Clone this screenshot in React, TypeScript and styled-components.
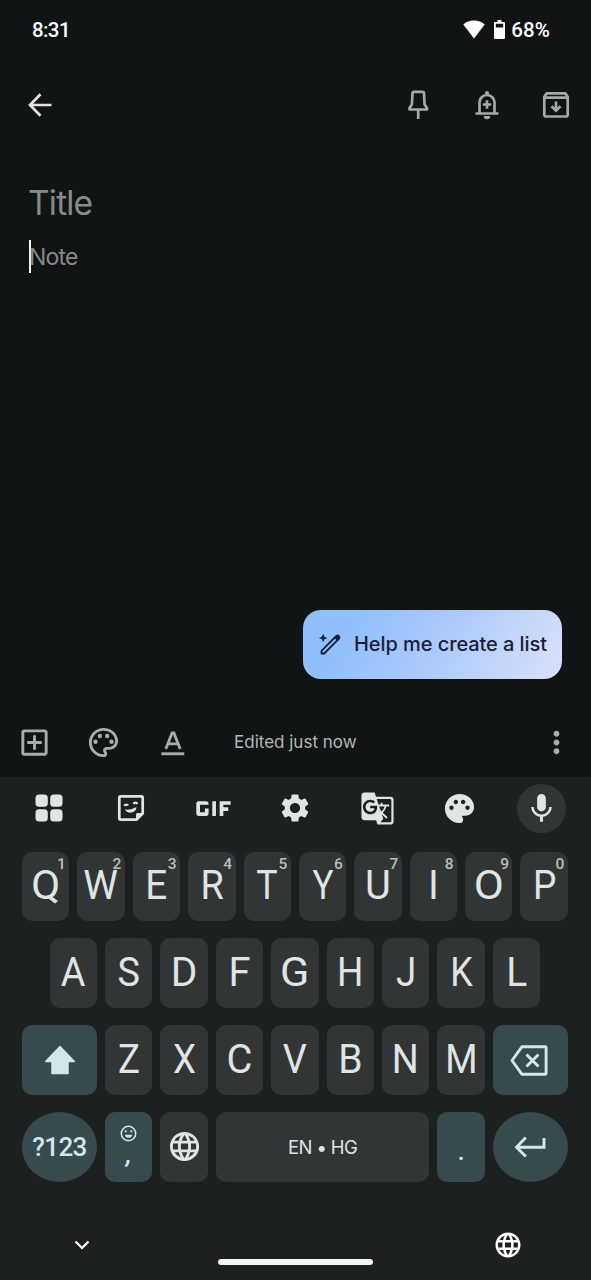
import React from "react";
import styled, { createGlobalStyle } from "styled-components";
import {
  MdOutlineAddBox,
  MdOutlinePalette,
  MdMoreVert,
  MdGif,
  MdSettings,
  MdGTranslate,
  MdPalette,
  MdMic,
  MdLanguage,
} from "react-icons/md";

const GlobalStyle = createGlobalStyle`
  * { box-sizing: border-box; }
  body { margin: 0; background: #101414; }
  svg { display: block; flex: none; }
`;

const Screen = styled.div`
  width: 591px;
  height: 1280px;
  display: flex;
  flex-direction: column;
  overflow: hidden;
  background: #101414;
  font-family: Inter, Roboto, "Liberation Sans", sans-serif;
`;

const StatusBar = styled.header`
  height: 59px;
  padding: 0 41px 0 32px;
  display: flex;
  align-items: center;
  justify-content: space-between;
  color: #fff;
`;

const StatusText = styled.span<{ $spacing: number }>`
  font: 500 20.5px/24px Roboto, sans-serif;
  letter-spacing: ${(p) => p.$spacing}px;
`;

const StatusIcons = styled.div`
  display: flex;
  align-items: center;
  gap: 6px;
  & > svg:first-child { margin-right: 3px; }
`;

const AppBar = styled.nav`
  height: 92px;
  padding: 0 18px 0 23px;
  display: flex;
  align-items: center;
  justify-content: space-between;
  color: #e1e3e3;
`;

const AppActions = styled.div`
  display: flex;
  gap: 35px;
  color: #a6a9a9;
`;

const Editor = styled.main`
  flex: 1;
  padding: 28px 29px 0 28px;
  display: flex;
  flex-direction: column;
  align-items: flex-start;
  color: #878a8a;
`;

const TitleField = styled.div`
  font-size: 33.5px;
  line-height: 48px;
  letter-spacing: -0.8px;
`;

const NoteField = styled.div`
  margin: 13px 0 0 1px;
  height: 33px;
  border-left: 2px solid #f4f5f5;
  font-size: 23px;
  line-height: 34px;
  letter-spacing: -0.8px;
`;

const NoteHint = styled.span`
  margin-left: -2px;
`;

const HelpButton = styled.button`
  align-self: flex-end;
  margin: auto 0 31px;
  width: 259px;
  height: 69px;
  padding: 0 0 1px 15px;
  border: 0;
  border-radius: 18px;
  display: flex;
  align-items: center;
  gap: 11px;
  color: #1b2138;
  background: linear-gradient(118deg, #91bffc 18%, #aecbfb 55%, #d6dffa 95%);
  font: 500 20px/24px Inter, Roboto, sans-serif;
  letter-spacing: -0.07px;
  white-space: nowrap;
`;

const NoteToolbar = styled.div`
  height: 67px;
  padding: 0 17px 3px 17px;
  display: flex;
  align-items: center;
  color: #a9acac;
`;

const ToolGroup = styled.div`
  display: flex;
  gap: 34px;
`;

const EditedLabel = styled.span`
  margin-left: 44px;
  flex: 1;
  font-size: 17px;
  color: #b4b7b7;
  white-space: nowrap;
`;

const Keyboard = styled.section`
  height: 503px;
  display: flex;
  flex-direction: column;
  background: #1c2020;
  color: #e0e4e4;
`;

const Suggestions = styled.div`
  height: 62px;
  margin-bottom: 12.7px;
  padding: 0 8px;
  display: grid;
  grid-template-columns: repeat(7, 1fr);
  place-items: center;
`;

const MicButton = styled.div`
  width: 49px;
  height: 49px;
  border-radius: 50%;
  display: grid;
  place-items: center;
  background: #313535;
`;

const KeyRows = styled.div`
  display: flex;
  flex-direction: column;
  gap: 17.3px;
  padding: 0 23.2px 0 22px;
`;

const KeyRow = styled.div`
  height: 69.5px;
  display: flex;
  justify-content: center;
  gap: 8px;
`;

const Key = styled.div<{ $w?: number; $accent?: boolean; $round?: boolean }>`
  position: relative;
  width: ${(p) => p.$w ?? 47.4}px;
  flex: none;
  display: flex;
  flex-direction: column;
  align-items: center;
  justify-content: center;
  border-radius: ${(p) => (p.$round ? "50%" : "10px")};
  background: ${(p) => (p.$accent ? "#374a4d" : "#313535")};
  color: ${(p) => (p.$accent ? "#d3e7ea" : "#e0e4e4")};
`;

const Letter = styled.span<{ $stretch: number }>`
  font: 400 39.8px/46px Roboto, sans-serif;
  transform: scaleX(${(p) => p.$stretch});
`;

const Hint = styled.span`
  position: absolute;
  top: 3px;
  right: 3.5px;
  font: 500 15.5px/18px Roboto, sans-serif;
  color: #b9bdbd;
`;

const SymbolLabel = styled.span`
  font: 500 26px/30px Roboto, sans-serif;
  letter-spacing: -0.6px;
`;

const SpaceLabel = styled.span`
  font-size: 18.5px;
  letter-spacing: -0.6px;
`;

const Punctuation = styled.span<{ $shift: number; $slant?: boolean }>`
  font: ${(p) => (p.$slant ? "italic" : "normal")} 500 26px/30px Roboto, sans-serif;
  margin-top: ${(p) => p.$shift}px;
`;

const NavBar = styled.footer`
  flex: 1;
  padding: 33px 68px 0 73px;
  display: flex;
  justify-content: space-between;
  align-items: flex-start;
  color: #fff;
`;

const HomeHandle = styled.div`
  width: 155px;
  height: 6px;
  margin: 44px 0 0 6px;
  border-radius: 3px;
  background: #f4f5f5;
`;

const ChevronBox = styled.div`
  margin-top: 24px;
`;

const GlobeBox = styled.div`
  margin-top: 15px;
`;

const stroke = { fill: "none", stroke: "currentColor" } as const;

const WifiIcon = () => (
  <svg width="22" height="19" viewBox="0 0 22 19" fill="currentColor">
    <path d="M11 .5C6.700.5 3 2 .3 4.400L11 18.500 21.700 4.400C19 2 15.300.5 11 .5Z" />
  </svg>
);

const BatteryIcon = () => (
  <svg width="11" height="19" viewBox="0 0 11 19" fill="currentColor" fillRule="evenodd">
    <path d="M3.500 0h4v2H10a1 1 0 0 1 1 1v15a1 1 0 0 1-1 1H1a1 1 0 0 1-1-1V3a1 1 0 0 1 1-1h2.500ZM1.800 3.800v3.700h7.400V3.800Z" />
  </svg>
);

const BackIcon = () => (
  <svg width="34" height="34" viewBox="0 0 34 34" {...stroke} strokeWidth="2.700">
    <path d="M28.500 17H7.500M17.500 6.300 7 17l10.500 10.700" />
  </svg>
);

const PinIcon = () => (
  <svg width="34" height="34" viewBox="0 0 34 34" {...stroke} strokeWidth="2.700" strokeLinejoin="round">
    <path d="M13 3.800h8.500a1.500 1.500 0 0 1 1.500 1.400l.6 11.300 2.400 3.500v1.500H8.500V20l2.400-3.500.6-11.300A1.500 1.500 0 0 1 13 3.800ZM17.200 21.500V31" />
  </svg>
);

const ReminderIcon = () => (
  <svg width="34" height="34" viewBox="0 0 34 34" {...stroke} strokeWidth="2.700">
    <path d="M5.500 25.500h23M9.500 25.500V14.500a7.500 7.500 0 0 1 15 0V25.500M17 4v3.500M17 12.300v8.400M12.800 16.500h8.400" />
    <circle cx="17" cy="5" r="2" fill="currentColor" stroke="none" />
    <path d="M13.800 28h6.400a3.200 3.200 0 0 1-6.400 0Z" fill="currentColor" stroke="none" />
  </svg>
);

const ArchiveIcon = () => (
  <svg width="34" height="34" viewBox="0 0 34 34" {...stroke} strokeWidth="2.700" strokeLinejoin="round">
    <path d="M5.300 8.700 7.700 5.400h18.600L28.700 8.700V26.500a2 2 0 0 1-2 2H7.300a2 2 0 0 1-2-2ZM5.300 9.700h23.400" />
    <path d="M17 13.500v9M12.500 18.200 17 22.700l4.500-4.500" strokeLinejoin="miter" />
  </svg>
);

const TextColorIcon = () => (
  <svg width="35" height="35" viewBox="0 0 35 35" {...stroke} strokeWidth="2.900">
    <path d="M6.300 28.800h23" />
    <path d="m10.800 24 6.300-16h1.800l6.300 16M13.200 18.800h9.600" strokeWidth="2.800" />
  </svg>
);

const MagicPenIcon = () => (
  <svg width="25" height="25" viewBox="0 0 25 25" {...stroke} strokeWidth="1.800" strokeLinejoin="round">
    <path d="M3.500 18.800 17.800 4.500a1.900 1.900 0 0 1 2.700 2.700L6.200 21.500H3.500Z" />
    <path d="m15.800 5.500 2-2a2.600 2.600 0 0 1 3.700 3.700l-2 2Z" fill="currentColor" stroke="none" />
    <path d="m5.200 1.700 1.300 3 3 1.300-3 1.300-1.300 3-1.300-3-3-1.300 3-1.300Z" fill="currentColor" stroke="none" />
  </svg>
);

const AppsIcon = () => (
  <svg width="28" height="28" viewBox="0 0 28 28" fill="currentColor">
    <rect x=".5" y=".5" width="12.300" height="12.300" rx="3.500" />
    <rect x="15.200" y=".5" width="12.300" height="12.300" rx="3.500" />
    <rect x=".5" y="15.200" width="12.300" height="12.300" rx="3.500" />
    <rect x="15.200" y="15.200" width="12.300" height="12.300" rx="3.500" />
  </svg>
);

const StickerIcon = () => (
  <svg width="28" height="28" viewBox="0 0 28 28" {...stroke} strokeWidth="2.700">
    <path d="M3.500 2.300h21a1.200 1.200 0 0 1 1.200 1.200v16l-6.200 6.200h-16a1.200 1.200 0 0 1-1.200-1.200v-21a1.200 1.200 0 0 1 1.200-1.200Z" />
    <path d="M19 26v-5.500a1.500 1.500 0 0 1 1.500-1.500H26Z" fill="currentColor" stroke="none" />
    <path d="M7.500 12c.5-1.800 2.800-1.800 3.500-.5M16.500 10c.7-1.800 3-1.800 3.700 0" strokeWidth="2.400" />
    <path d="M8 15.500c4 .5 8-.5 11.500-2.500-.3 6-8.500 8-11.500 2.500Z" fill="currentColor" stroke="none" />
  </svg>
);

const ShiftIcon = () => (
  <svg width="32" height="30" viewBox="0 0 32 30" fill="currentColor" stroke="currentColor" strokeWidth="1.500" strokeLinejoin="round">
    <path d="M16 1.500 30.300 16.500H24V28.500H8V16.500H1.700Z" />
  </svg>
);

const BackspaceIcon = () => (
  <svg width="41" height="31" viewBox="0 0 41 31" {...stroke} strokeWidth="2.900" strokeLinejoin="round">
    <path d="M12 1.700h23.300a.8.800 0 0 1 .8.800v26a.8.800 0 0 1-.8.800H12L2 15.500ZM16.500 9.500l12 12M28.500 9.500l-12 12" />
  </svg>
);

const EnterIcon = () => (
  <svg width="33" height="22" viewBox="0 0 33 22" {...stroke} strokeWidth="2.900">
    <path d="M30 2v9.200H3M11.800 1.500 2.500 11.200l9.300 9.300" />
  </svg>
);

const SmileIcon = () => (
  <svg width="17" height="17" viewBox="0 0 17 17" {...stroke} strokeWidth="1.500">
    <circle cx="8.500" cy="8.500" r="7.200" />
    <path d="M5.700 5.200v2M11.300 5.200v2" strokeWidth="1.800" />
    <path d="M5 9.800h7a3.500 3 0 0 1-7 0Z" fill="currentColor" stroke="none" />
  </svg>
);

const ChevronIcon = () => (
  <svg width="18" height="12" viewBox="0 0 18 12" {...stroke} strokeWidth="2.200">
    <path d="m2.500 2.500 6.500 6.500 6.500-6.500" />
  </svg>
);

const TOP: [string, number][] = [
  ["Q", 1.06], ["W", 0.98], ["E", 0.97], ["R", 0.95], ["T", 0.9],
  ["Y", 0.88], ["U", 1], ["I", 1], ["O", 1.1], ["P", 0.93],
];
const HOME: [string, number][] = [
  ["A", 0.95], ["S", 0.95], ["D", 1.02], ["F", 1], ["G", 1.08],
  ["H", 0.93], ["J", 0.92], ["K", 0.9], ["L", 0.98],
];
const BOTTOM: [string, number][] = [
  ["Z", 0.92], ["X", 0.92], ["C", 1], ["V", 0.95], ["B", 0.98], ["N", 0.95], ["M", 0.93],
];

const LetterKeys = ({ letters, hints }: { letters: [string, number][]; hints?: boolean }) => (
  <>
    {letters.map(([letter, stretch], i) => (
      <Key key={letter}>
        <Letter $stretch={stretch}>{letter}</Letter>
        {hints && <Hint>{(i + 1) % 10}</Hint>}
      </Key>
    ))}
  </>
);

export default function App() {
  return (
    <Screen>
      <GlobalStyle />
      <StatusBar>
        <StatusText $spacing={-0.6}>8:31</StatusText>
        <StatusIcons>
          <WifiIcon />
          <BatteryIcon />
          <StatusText $spacing={0.1}>68%</StatusText>
        </StatusIcons>
      </StatusBar>
      <AppBar>
        <BackIcon />
        <AppActions>
          <PinIcon />
          <ReminderIcon />
          <ArchiveIcon />
        </AppActions>
      </AppBar>
      <Editor>
        <TitleField>Title</TitleField>
        <NoteField><NoteHint>Note</NoteHint></NoteField>
        <HelpButton>
          <MagicPenIcon />
          Help me create a list
        </HelpButton>
      </Editor>
      <NoteToolbar>
        <ToolGroup>
          <MdOutlineAddBox size={35} />
          <MdOutlinePalette size={35} />
          <TextColorIcon />
        </ToolGroup>
        <EditedLabel>Edited just now</EditedLabel>
        <MdMoreVert size={35} />
      </NoteToolbar>
      <Keyboard>
        <Suggestions>
          <AppsIcon />
          <StickerIcon />
          <MdGif size={59} />
          <MdSettings size={34} />
          <MdGTranslate size={35} />
          <MdPalette size={35} />
          <MicButton><MdMic size={35} /></MicButton>
        </Suggestions>
        <KeyRows>
          <KeyRow><LetterKeys letters={TOP} hints /></KeyRow>
          <KeyRow><LetterKeys letters={HOME} /></KeyRow>
          <KeyRow>
            <Key $w={75} $accent><ShiftIcon /></Key>
            <LetterKeys letters={BOTTOM} />
            <Key $w={75} $accent><BackspaceIcon /></Key>
          </KeyRow>
          <KeyRow>
            <Key $w={75} $accent $round><SymbolLabel>?123</SymbolLabel></Key>
            <Key $accent>
              <SmileIcon />
              <Punctuation $shift={-3} $slant>,</Punctuation>
            </Key>
            <Key><MdLanguage size={35} /></Key>
            <Key $w={213.6}><SpaceLabel>EN • HG</SpaceLabel></Key>
            <Key $accent><Punctuation $shift={8}>.</Punctuation></Key>
            <Key $w={75} $accent $round><EnterIcon /></Key>
          </KeyRow>
        </KeyRows>
        <NavBar>
          <ChevronBox><ChevronIcon /></ChevronBox>
          <HomeHandle />
          <GlobeBox><MdLanguage size={30} /></GlobeBox>
        </NavBar>
      </Keyboard>
    </Screen>
  );
}
